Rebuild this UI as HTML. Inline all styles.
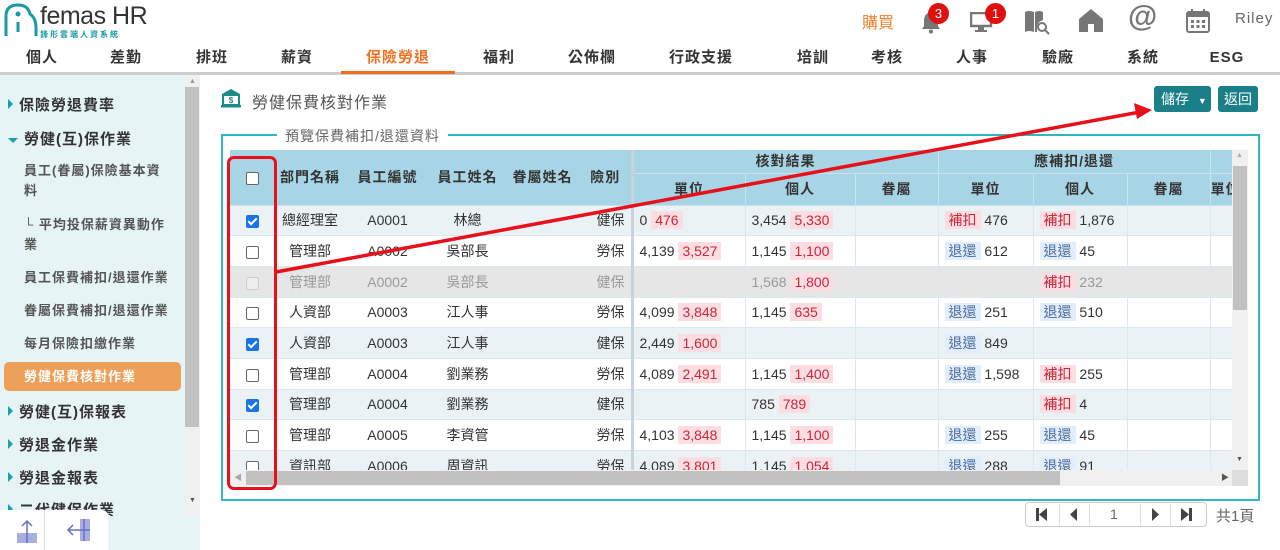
<!DOCTYPE html>
<html><head><meta charset="utf-8">
<style>
*{box-sizing:border-box;margin:0;padding:0}
body{width:1280px;height:550px;overflow:hidden;background:#fff;font-family:"Liberation Sans","Noto Sans CJK TC",sans-serif;color:#333;position:relative}
.abs{position:absolute}
.nav span{position:absolute;top:46px;font-size:15px;font-weight:bold;color:#333;letter-spacing:1px;transform:translateX(-50%);white-space:nowrap}
.side{position:absolute;left:0;top:75px;width:200px;height:475px;background:#e6f4f5}
.side .t{position:absolute;left:8px;font-size:15px;font-weight:bold;color:#333;letter-spacing:1px;white-space:nowrap}
.side .t i{display:inline-block;width:0;height:0;border-left:5px solid #1aa0b0;border-top:5px solid transparent;border-bottom:5px solid transparent;margin-right:6px;vertical-align:1px}
.side .t i.d{border-top:5px solid #1aa0b0;border-left:5px solid transparent;border-right:5px solid transparent;border-bottom:0}
.side .s{position:absolute;left:24px;font-size:13px;color:#555;letter-spacing:1px;font-weight:bold;line-height:20px;width:150px}
table{border-collapse:collapse;font-size:14px;table-layout:fixed}
th{background:#a8d5e5;color:#333;font-weight:bold;letter-spacing:1px;font-size:14px;border-bottom:1px solid #c8e3ee}
th.v{border-right:1px solid #c8e3ee}
td{height:30.7px;border-bottom:1px solid #dde8ee;white-space:nowrap;padding:0 6px;color:#333}
td.v{border-right:1px solid #dde8ee}
tr.a td{background:#eaf2f5}
tr.w td{background:#fff}
tr.g td{background:#e6e6e6;color:#999}
.r{background:#fbdde2;color:#c8283c;padding:1px 4px}
.b{background:#e2eefb;color:#4a6aa0;padding:1px 4px}
.cb{display:inline-block;width:13px;height:13px;border:1px solid #666;border-radius:2px;background:#fff;vertical-align:middle}
.ck{display:inline-block;width:13px;height:13px;border-radius:2px;background:#1a73e8;vertical-align:middle;position:relative}
.ck:after{content:"";position:absolute;left:4px;top:1px;width:3px;height:7px;border:solid #fff;border-width:0 2px 2px 0;transform:rotate(45deg)}
.dis{display:inline-block;width:13px;height:13px;border:1px solid #ccc;border-radius:2px;background:#eee;vertical-align:middle}
.c{text-align:center}
.sep{border-right:3px solid #c8d3dc !important}
</style></head><body>
<svg class="abs" style="left:2px;top:2px" width="40" height="36" viewBox="0 0 40 36"><path d="M4 34 V14 Q4 3 16 3 Q26 3 28 12 Q34 16 34 26 V34" fill="none" stroke="#1a9aa8" stroke-width="3"/><circle cx="16" cy="12" r="2.5" fill="#1a9aa8"/><path d="M16 20 V30" stroke="#1a9aa8" stroke-width="3"/></svg>
<div class="abs" style="left:40px;top:2px;font-size:25px;color:#333;letter-spacing:-0.5px">femas HR</div>
<div class="abs" style="left:40px;top:29px;font-size:8px;color:#1a9aa8;letter-spacing:2px;font-weight:bold">鋒形雲端人資系統</div>
<div class="abs" style="left:862px;top:9px;font-size:16px;color:#f08030">購買</div>
<svg class="abs" style="left:920px;top:10px" width="22" height="24" viewBox="0 0 22 24"><path d="M11 2 Q4 3 4 11 V16 L2 19 H20 L18 16 V11 Q18 3 11 2Z" fill="#777"/><circle cx="11" cy="21.5" r="2" fill="#777"/></svg>
<div class="abs" style="left:928px;top:3px;width:21px;height:21px;border-radius:50%;background:#e01010;color:#fff;font-size:13px;text-align:center;line-height:21px">3</div>
<svg class="abs" style="left:970px;top:12px" width="26" height="22" viewBox="0 0 26 22"><rect x="1" y="1" width="20" height="13" fill="none" stroke="#777" stroke-width="2.5"/><rect x="8" y="15" width="6" height="3" fill="#777"/><rect x="5" y="18" width="12" height="2" fill="#777"/></svg>
<div class="abs" style="left:985px;top:3px;width:21px;height:21px;border-radius:50%;background:#e01010;color:#fff;font-size:13px;text-align:center;line-height:21px">1</div>
<svg class="abs" style="left:1023px;top:8px" width="28" height="28" viewBox="0 0 28 28"><path d="M2 4 Q6 2 11 4 V24 Q6 22 2 24Z M12 4 Q16 2 20 4 V12 Q14 14 14 20 V24 H12Z" fill="#777"/><circle cx="19" cy="19" r="4" fill="none" stroke="#777" stroke-width="2"/><path d="M22 22 L26 26" stroke="#777" stroke-width="2"/></svg>
<svg class="abs" style="left:1078px;top:7px" width="26" height="26" viewBox="0 0 26 26"><path d="M13 2 L25 12 V25 H16 V17 H10 V25 H1 V12Z" fill="#777"/></svg>
<div class="abs" style="left:1128px;top:0px;font-size:30px;font-weight:bold;color:#777">@</div>
<svg class="abs" style="left:1185px;top:7px" width="26" height="27" viewBox="0 0 26 27"><rect x="2" y="5" width="22" height="20" rx="2" fill="none" stroke="#777" stroke-width="2"/><rect x="2" y="5" width="22" height="5" fill="#777"/><path d="M7 2 V7 M19 2 V7" stroke="#777" stroke-width="2"/><g fill="#777"><rect x="6" y="13" width="3" height="3"/><rect x="11.5" y="13" width="3" height="3"/><rect x="17" y="13" width="3" height="3"/><rect x="6" y="18" width="3" height="3"/><rect x="11.5" y="18" width="3" height="3"/><rect x="17" y="18" width="3" height="3"/></g></svg>
<div class="abs" style="left:1235px;top:10px;font-size:15px;color:#666;letter-spacing:1px">Riley</div>
<div class="nav">
<span style="left:42px">個人</span><span style="left:126px">差勤</span><span style="left:212px">排班</span><span style="left:297px">薪資</span><span style="left:398px;color:#f07020">保險勞退</span><span style="left:499px">福利</span><span style="left:592px">公佈欄</span><span style="left:701px">行政支援</span><span style="left:813px">培訓</span><span style="left:887px">考核</span><span style="left:972px">人事</span><span style="left:1058px">驗廠</span><span style="left:1143px">系統</span><span style="left:1227px;top:49px">ESG</span>
</div>
<div class="abs" style="left:0;top:72px;width:1280px;height:3px;background:#ccc"></div>
<div class="abs" style="left:341px;top:71px;width:114px;height:3px;background:#f07020"></div>
<div class="side">
<div class="t" style="top:19px"><i></i>保險勞退費率</div>
<div class="t" style="top:53px"><i class="d"></i>勞健(互)保作業</div>
<div class="s" style="top:86px">員工(眷屬)保險基本資料</div>
<div class="s" style="top:140px">└ 平均投保薪資異動作業</div>
<div class="s" style="top:193px">員工保費補扣/退還作業</div>
<div class="s" style="top:226px">眷屬保費補扣/退還作業</div>
<div class="s" style="top:259px">每月保險扣繳作業</div>
<div class="abs" style="left:4px;top:287px;width:177px;height:29px;background:#eea05a;border-radius:5px"></div>
<div class="s" style="top:292px;color:#fff">勞健保費核對作業</div>
<div class="t" style="top:326px"><i></i>勞健(互)保報表</div>
<div class="t" style="top:359px"><i></i>勞退金作業</div>
<div class="t" style="top:392px"><i></i>勞退金報表</div>
<div class="t" style="top:424px"><i></i>二代健保作業</div>
<div class="abs" style="left:185px;top:0;width:15px;height:440px;background:#f0f0f0"></div>
<div class="abs" style="left:185px;top:12px;width:14px;height:340px;background:#c1c1c1"></div>
<div class="abs" style="left:189px;top:3px;font-size:7px;color:#999">▲</div>
<div class="abs" style="left:189px;top:422px;font-size:7px;color:#555">▼</div>
<div class="abs" style="left:0;top:435px;width:108px;height:40px;background:#fff;border-radius:0 6px 0 0"></div>
<div class="abs" style="left:44px;top:435px;width:1px;height:40px;background:#ddd"></div>
<svg class="abs" style="left:12px;top:442px" width="30" height="30" viewBox="0 0 30 30"><rect x="5" y="16" width="20" height="10" fill="#a8aee0"/><path d="M15 4 V26 M10 9 L15 4 L20 9" fill="none" stroke="#6670c8" stroke-width="1.5"/></svg>
<svg class="abs" style="left:64px;top:440px" width="30" height="30" viewBox="0 0 30 30"><rect x="16" y="4" width="10" height="22" fill="#a8aee0"/><path d="M4 15 H26 M9 10 L4 15 L9 20" fill="none" stroke="#6670c8" stroke-width="1.5"/><path d="M20 4 V26" stroke="#6670c8" stroke-width="1.5"/></svg>
</div>
<svg class="abs" style="left:221px;top:88px" width="20" height="20" viewBox="0 0 20 20"><path d="M10 1 L19 6 H1Z" fill="#1a8a8a"/><rect x="2" y="7" width="16" height="10" fill="none" stroke="#1a8a8a" stroke-width="2"/><rect x="0" y="17" width="20" height="2.5" fill="#1a8a8a"/><text x="10" y="15" font-size="8" font-weight="bold" fill="#1a8a8a" text-anchor="middle" font-family="Liberation Sans">$</text></svg>
<div class="abs" style="left:252px;top:89px;font-size:16px;color:#555;letter-spacing:1px">勞健保費核對作業</div>
<div class="abs" style="left:1154px;top:86px;width:57px;height:26px;background:#1a7f88;border-radius:3px;color:#fff;font-size:14px;line-height:26px;padding-left:7px">儲存 <span style="font-size:9px;margin-left:5px">▼</span></div>
<div class="abs" style="left:1218px;top:86px;width:40px;height:26px;background:#1a7f88;border-radius:3px;color:#fff;font-size:14px;line-height:26px;text-align:center">返回</div>
<div class="abs" style="left:221px;top:134px;width:1039px;height:367px;border:2px solid #30b8c0"></div>
<div class="abs" style="left:277px;top:126px;background:#fff;padding:0 8px;font-size:14px;color:#666;letter-spacing:1px">預覽保費補扣/退還資料</div>
<div class="abs" style="left:230px;top:150px;width:1002px;height:320px;overflow:hidden;background:#fff">
<table style="width:1080px">
<colgroup><col style="width:45px"><col style="width:70px"><col style="width:85px"><col style="width:75px"><col style="width:75px"><col style="width:52px"><col style="width:113px"><col style="width:110px"><col style="width:83px"><col style="width:95px"><col style="width:94px"><col style="width:83px"><col style="width:100px"></colgroup>
<tr style="height:23px"><th rowspan="2"><span class="cb"></span></th><th rowspan="2">部門名稱</th><th rowspan="2">員工編號</th><th rowspan="2">員工姓名</th><th rowspan="2">眷屬姓名</th><th rowspan="2" class="sep">險別</th><th colspan="3" class="v">核對結果</th><th colspan="3" class="v">應補扣/退還</th><th>&nbsp;</th></tr>
<tr style="height:32px"><th class="v">單位</th><th class="v">個人</th><th class="v">眷屬</th><th class="v">單位</th><th class="v">個人</th><th class="v">眷屬</th><th style="text-align:left">單位</th></tr>
<tr class="a"><td class="c"><span class="ck"></span></td><td class="c">總經理室</td><td class="c">A0001</td><td class="c">林總</td><td></td><td class="sep" style="text-align:right">健保</td><td class="v">0 <span class="r">476</span></td><td class="v">3,454 <span class="r">5,330</span></td><td class="v"></td><td class="v"><span class="r">補扣</span> 476</td><td class="v"><span class="r">補扣</span> 1,876</td><td class="v"></td><td></td></tr>
<tr class="w"><td class="c"><span class="cb"></span></td><td class="c">管理部</td><td class="c">A0002</td><td class="c">吳部長</td><td></td><td class="sep" style="text-align:right">勞保</td><td class="v">4,139 <span class="r">3,527</span></td><td class="v">1,145 <span class="r">1,100</span></td><td class="v"></td><td class="v"><span class="b">退還</span> 612</td><td class="v"><span class="b">退還</span> 45</td><td class="v"></td><td></td></tr>
<tr class="g"><td class="c"><span class="dis"></span></td><td class="c">管理部</td><td class="c">A0002</td><td class="c">吳部長</td><td></td><td class="sep" style="text-align:right">健保</td><td class="v"></td><td class="v">1,568 <span class="r">1,800</span></td><td class="v"></td><td class="v"></td><td class="v"><span class="r">補扣</span> 232</td><td class="v"></td><td></td></tr>
<tr class="w"><td class="c"><span class="cb"></span></td><td class="c">人資部</td><td class="c">A0003</td><td class="c">江人事</td><td></td><td class="sep" style="text-align:right">勞保</td><td class="v">4,099 <span class="r">3,848</span></td><td class="v">1,145 <span class="r">635</span></td><td class="v"></td><td class="v"><span class="b">退還</span> 251</td><td class="v"><span class="b">退還</span> 510</td><td class="v"></td><td></td></tr>
<tr class="a"><td class="c"><span class="ck"></span></td><td class="c">人資部</td><td class="c">A0003</td><td class="c">江人事</td><td></td><td class="sep" style="text-align:right">健保</td><td class="v">2,449 <span class="r">1,600</span></td><td class="v"></td><td class="v"></td><td class="v"><span class="b">退還</span> 849</td><td class="v"></td><td class="v"></td><td></td></tr>
<tr class="w"><td class="c"><span class="cb"></span></td><td class="c">管理部</td><td class="c">A0004</td><td class="c">劉業務</td><td></td><td class="sep" style="text-align:right">勞保</td><td class="v">4,089 <span class="r">2,491</span></td><td class="v">1,145 <span class="r">1,400</span></td><td class="v"></td><td class="v"><span class="b">退還</span> 1,598</td><td class="v"><span class="r">補扣</span> 255</td><td class="v"></td><td></td></tr>
<tr class="a"><td class="c"><span class="ck"></span></td><td class="c">管理部</td><td class="c">A0004</td><td class="c">劉業務</td><td></td><td class="sep" style="text-align:right">健保</td><td class="v"></td><td class="v">785 <span class="r">789</span></td><td class="v"></td><td class="v"></td><td class="v"><span class="r">補扣</span> 4</td><td class="v"></td><td></td></tr>
<tr class="w"><td class="c"><span class="cb"></span></td><td class="c">管理部</td><td class="c">A0005</td><td class="c">李資管</td><td></td><td class="sep" style="text-align:right">勞保</td><td class="v">4,103 <span class="r">3,848</span></td><td class="v">1,145 <span class="r">1,100</span></td><td class="v"></td><td class="v"><span class="b">退還</span> 255</td><td class="v"><span class="b">退還</span> 45</td><td class="v"></td><td></td></tr>
<tr class="a"><td class="c"><span class="cb"></span></td><td class="c">資訊部</td><td class="c">A0006</td><td class="c">周資訊</td><td></td><td class="sep" style="text-align:right">勞保</td><td class="v">4,089 <span class="r">3,801</span></td><td class="v">1,145 <span class="r">1,054</span></td><td class="v"></td><td class="v"><span class="b">退還</span> 288</td><td class="v"><span class="b">退還</span> 91</td><td class="v"></td><td></td></tr>
</table>
</div>
<div class="abs" style="left:1232px;top:150px;width:16px;height:320px;background:#f0f0f0"></div>
<div class="abs" style="left:1233px;top:166px;width:14px;height:144px;background:#c1c1c1"></div>
<div class="abs" style="left:1236px;top:152px;font-size:7px;color:#aaa">▲</div>
<div class="abs" style="left:1236px;top:456px;font-size:7px;color:#555">▼</div>
<div class="abs" style="left:230px;top:470px;width:1002px;height:16px;background:#f0f0f0"></div>
<div class="abs" style="left:246px;top:471px;width:814px;height:14px;background:#c1c1c1"></div>
<div class="abs" style="left:234px;top:472px;font-size:8px;color:#aaa">◀</div>
<div class="abs" style="left:1221px;top:472px;font-size:8px;color:#555">▶</div>
<div class="abs" style="left:1232px;top:470px;width:16px;height:16px;background:#ddd"></div>
<div class="abs" style="left:1025px;top:502px;width:182px;height:25px;border:1px solid #ccc;border-radius:4px;background:#fff"></div>
<div class="abs" style="left:1059px;top:502px;width:1px;height:25px;background:#ddd"></div>
<div class="abs" style="left:1089px;top:502px;width:1px;height:25px;background:#ddd"></div>
<div class="abs" style="left:1140px;top:502px;width:1px;height:25px;background:#ddd"></div>
<div class="abs" style="left:1170px;top:502px;width:1px;height:25px;background:#ddd"></div>
<svg class="abs" style="left:1035px;top:506px" width="160" height="17" viewBox="0 0 160 17"><rect x="1" y="2" width="3" height="13" fill="#444"/><path d="M12 2 L4 8.5 L12 15Z" fill="#444"/><path d="M42 2 L35 8.5 L42 15Z" fill="#444"/><path d="M117 2 L124 8.5 L117 15Z" fill="#444"/><path d="M146 2 L154 8.5 L146 15Z" fill="#444"/><rect x="154" y="2" width="3" height="13" fill="#444"/></svg>
<div class="abs" style="left:1110px;top:506px;font-size:14px;color:#666">1</div>
<div class="abs" style="left:1216px;top:505px;font-size:15px;color:#666">共1頁</div>
<div class="abs" style="left:227px;top:156px;width:50px;height:334px;border:3px solid #e8101a;border-radius:7px"></div>
<svg class="abs" style="left:0;top:0" width="1280" height="550"><line x1="276" y1="272" x2="1140" y2="112" stroke="#e8101a" stroke-width="3.5"/><path d="M1152 110 L1134 103 L1137 119Z" fill="#e8101a"/></svg>
</body></html>
